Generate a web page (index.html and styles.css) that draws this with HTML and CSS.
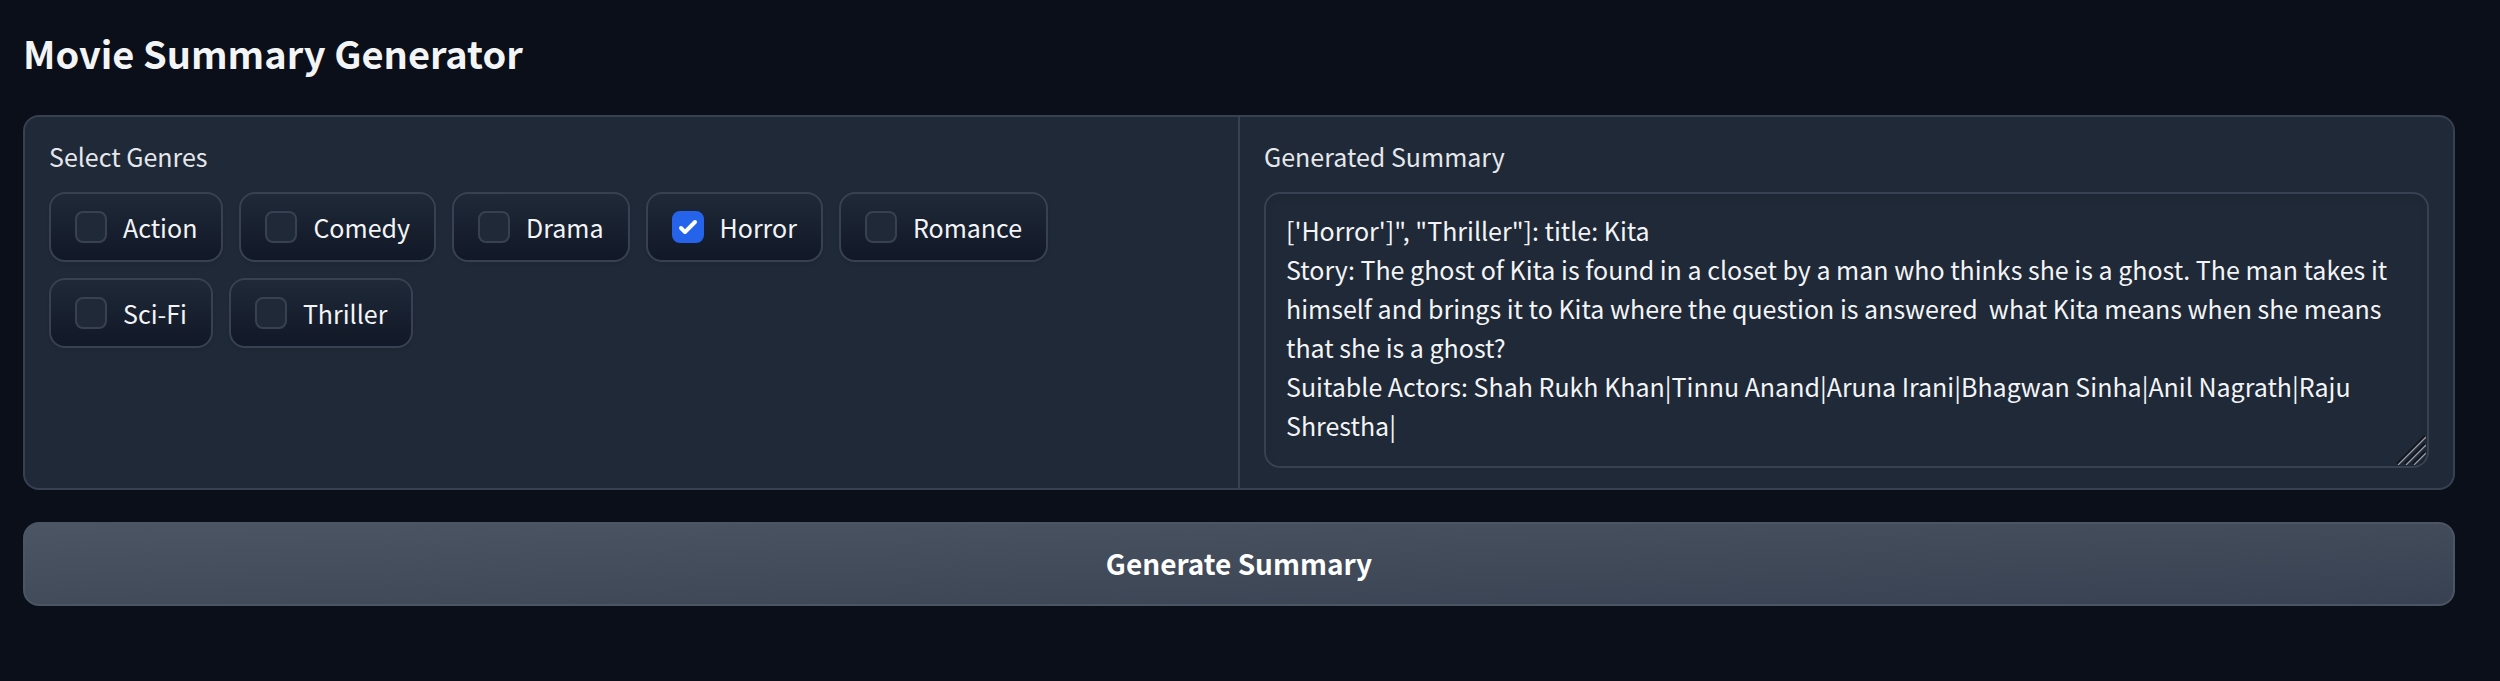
FILE: index.html
```html
<!DOCTYPE html>
<html lang="en">
<head>
<meta charset="utf-8">
<title>Movie Summary Generator</title>
<meta name="viewport" content="width=device-width, initial-scale=1">
<link rel="stylesheet" href="styles.css">
</head>
<body>
<main class="app">
  <h1 class="title">Movie Summary Generator</h1>
  <form class="form">
    <div class="panel">
      <fieldset class="block">
        <legend class="block-label">Select Genres</legend>
        <div class="genres">
          <label class="chip"><input class="check" type="checkbox" name="genre" value="Action"><span>Action</span></label>
          <label class="chip"><input class="check" type="checkbox" name="genre" value="Comedy"><span>Comedy</span></label>
          <label class="chip"><input class="check" type="checkbox" name="genre" value="Drama"><span>Drama</span></label>
          <label class="chip"><input class="check" type="checkbox" name="genre" value="Horror" checked><span>Horror</span></label>
          <label class="chip"><input class="check" type="checkbox" name="genre" value="Romance"><span>Romance</span></label>
          <label class="chip"><input class="check" type="checkbox" name="genre" value="Sci-Fi"><span>Sci-Fi</span></label>
          <label class="chip"><input class="check" type="checkbox" name="genre" value="Thriller"><span>Thriller</span></label>
        </div>
      </fieldset>
      <div class="block">
        <label class="block-label" for="summary">Generated Summary</label>
        <div class="output">
          <textarea class="summary" id="summary" rows="6" spellcheck="false">['Horror']", "Thriller"]: title: Kita
Story: The ghost of Kita is found in a closet by a man who thinks she is a ghost. The man takes it himself and brings it to Kita where the question is answered  what Kita means when she means that she is a ghost?
Suitable Actors: Shah Rukh Khan|Tinnu Anand|Aruna Irani|Bhagwan Sinha|Anil Nagrath|Raju Shrestha|</textarea>
          <svg class="grip" viewBox="0 0 30 30" aria-hidden="true">
            <g fill="none">
              <path stroke="#10151d" stroke-width="2.4" d="M1 29 29 1M9 29 29 9M17 29 29 17M25 29 29 25"/>
              <path stroke="#9a9ea5" stroke-width="1.3" d="M2 30 30 2M10 30 30 10M18 30 30 18M26 30 30 26"/>
            </g>
          </svg>
        </div>
      </div>
    </div>
    <button class="submit" type="button">Generate Summary</button>
  </form>
</main>
</body>
</html>
```
FILE: styles.css
```css
* {
  box-sizing: border-box;
}

body {
  margin: 0;
  min-height: 100vh;
  background: #0b0f19;
  color: #f3f4f6;
  font-family: "Noto Sans CJK JP", "Noto Sans CJK SC", "Open Sans", sans-serif;
  font-size: 25px;
  line-height: 42px;
}

.app {
  padding: 25px 45px 28px 23px;
}

.title {
  margin: 0 0 34px;
  font-size: 38px;
  font-weight: 600;
  line-height: 56px;
}

.form {
  display: grid;
  gap: 32px;
}

.panel {
  display: grid;
  grid-template-columns: 1fr 1fr;
  gap: 2px;
  overflow: hidden;
  border: 2px solid #374151;
  border-radius: 16px;
  background: #374151;
}

.block {
  min-width: 0;
  margin: 0;
  padding: 18px 24px 20px;
  border: 0;
  background: #1f2937;
}

.block-label {
  display: block;
  float: left;
  width: 100%;
  margin-bottom: 15px;
  padding: 0;
  color: #e5e7eb;
}

.genres {
  display: flex;
  flex-wrap: wrap;
  gap: 16px;
  clear: both;
  max-width: 1064px;
}

.chip {
  display: flex;
  align-items: center;
  gap: 16px;
  padding: 12px 24px;
  border: 2px solid #374151;
  border-radius: 16px;
  background: linear-gradient(to top, #111827, #1f2937);
  box-shadow: 0 2px 4px rgba(0, 0, 0, 0.05);
}

.check {
  appearance: none;
  flex: none;
  width: 32px;
  height: 32px;
  margin: 0;
  border: 2px solid #374151;
  border-radius: 8px;
  background: #1f2937;
}

.check:checked {
  border-color: #2563eb;
  background: #2563eb url("data:image/svg+xml,%3Csvg viewBox='0 0 16 16' fill='white' xmlns='http://www.w3.org/2000/svg'%3E%3Cpath d='M12.207 4.793a1 1 0 010 1.414l-5 5a1 1 0 01-1.414 0l-2-2a1 1 0 011.414-1.414L6.5 9.086l4.293-4.293a1 1 0 011.414 0z'/%3E%3C/svg%3E") center / 100% no-repeat border-box;
}

.output {
  position: relative;
  clear: both;
}

.summary {
  display: block;
  width: 100%;
  padding: 17px 20px 21px;
  border: 2px solid #374151;
  border-radius: 16px;
  outline: none;
  background: #1f2937;
  box-shadow: inset 0 4px 8px rgba(0, 0, 0, 0.05);
  color: #f3f4f6;
  font: inherit;
  line-height: 39px;
  resize: none;
  overflow: hidden;
}

.grip {
  position: absolute;
  right: 3px;
  bottom: 3px;
  width: 30px;
  height: 30px;
  border-bottom-right-radius: 12px;
}

.submit {
  padding: 15px 24px 17px;
  border: 2px solid #4b5563;
  border-radius: 16px;
  background: linear-gradient(to bottom right, #4b5563, #374151);
  color: #fff;
  font: inherit;
  font-size: 28px;
  font-weight: 600;
  line-height: 48px;
}
```
